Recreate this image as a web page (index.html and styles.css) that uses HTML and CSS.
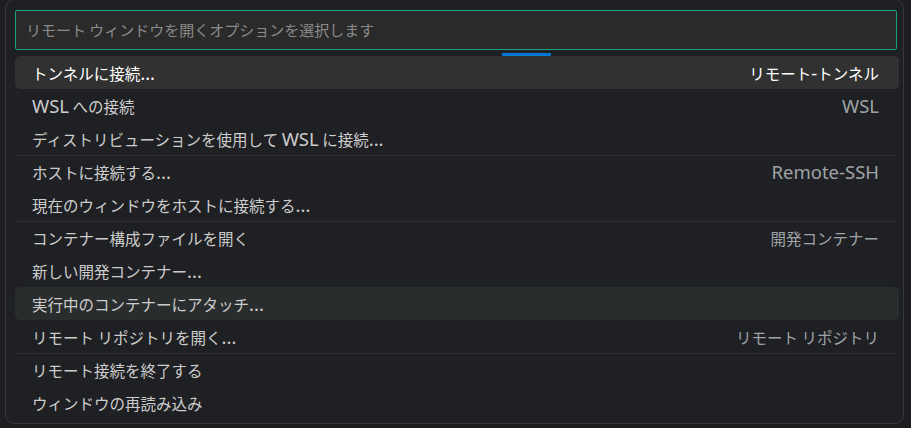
FILE: index.html
```html
<!DOCTYPE html>
<html lang="ja">
<head>
<meta charset="utf-8">
<link rel="stylesheet" href="styles.css">
</head>
<body>
<div class="panel">
  <div class="input">リモート ウィンドウを開くオプションを選択します</div>
  <div class="progress"><div class="bar"></div></div>
  <div class="list">
    <div class="row focused"><span class="label">トンネルに接続<span class="en">...</span></span><span class="detail">リモート<span class="en">-</span>トンネル</span></div>
    <div class="row"><span class="label"><span class="en">WSL</span> への接続</span><span class="detail en">WSL</span></div>
    <div class="row"><span class="label">ディストリビューションを使用して <span class="en">WSL</span> に接続<span class="en">...</span></span></div>
    <div class="row sep"><span class="label">ホストに接続する<span class="en">...</span></span><span class="detail en">Remote-SSH</span></div>
    <div class="row"><span class="label">現在のウィンドウをホストに接続する<span class="en">...</span></span></div>
    <div class="row sep"><span class="label">コンテナー構成ファイルを開く</span><span class="detail">開発コンテナー</span></div>
    <div class="row"><span class="label">新しい開発コンテナー<span class="en">...</span></span></div>
    <div class="row hover"><span class="label">実行中のコンテナーにアタッチ<span class="en">...</span></span></div>
    <div class="row"><span class="label">リモート リポジトリを開く<span class="en">...</span></span><span class="detail">リモート リポジトリ</span></div>
    <div class="row sep"><span class="label">リモート接続を終了する</span></div>
    <div class="row"><span class="label">ウィンドウの再読み込み</span></div>
  </div>
</div>
</body>
</html>
```
FILE: styles.css
```css
html, body {
  margin: 0;
  padding: 0;
  background: #1d1e21;
  width: 911px;
  height: 428px;
  overflow: hidden;
}
body {
  font-family: "Noto Sans CJK JP", "Noto Sans", sans-serif;
  font-size: 15.5px;
}
.en {
  font-family: "Noto Sans", "Noto Sans CJK JP", sans-serif;
  font-size: 18.5px;
}
.panel {
  margin-left: 5px;
  margin-top: -1px;
  width: 899px;
  height: 425px;
  box-sizing: border-box;
  border: 1px solid #36383b;
  border-radius: 9px;
  background: #1f2023;
  padding: 10px 8px 0 9px;
}
.input {
  height: 40px;
  box-sizing: border-box;
  border: 1px solid #16a37e;
  border-radius: 2px;
  background: #2a2a2a;
  color: #8a8a8a;
  padding-left: 10px;
  line-height: 38px;
  width: 882px;
  font-size: 15px;
}
.progress {
  height: 3px;
  margin-top: 3px;
  width: 882px;
}
.bar {
  margin-left: 487px;
  width: 49px;
  height: 3px;
  background: #0078d4;
}
.list {
  width: 884px;
}
.row {
  height: 33px;
  box-sizing: border-box;
  display: flex;
  align-items: center;
  justify-content: space-between;
  padding: 0 20px 0 17px;
  color: #cccccc;
  border-radius: 5px;
  line-height: 24px;
}
.row.sep {
  border-top: 1px solid #2f3033;
  border-radius: 0;
  margin: 0 2px 0 1px;
  padding: 0 18px 0 16px;
}
.row.focused {
  background: #313131;
  color: #ffffff;
}
.row.focused .detail {
  color: #ffffff;
}
.row.hover {
  background: #2a2d2e;
}
.detail {
  color: #9ea3a8;
}
```
